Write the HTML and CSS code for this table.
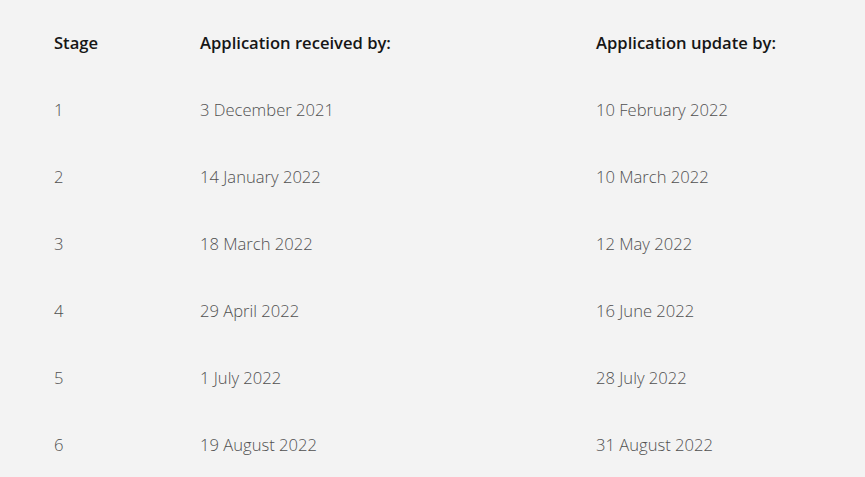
FILE: index.html
```html
<!DOCTYPE html>
<html lang="en">
<head>
<meta charset="utf-8">
<title>Stages</title>
<link rel="stylesheet" href="styles.css">
</head>
<body>
<div class="table">
  <div class="row head">
    <div class="c1">Stage</div>
    <div class="c2">Application received by:</div>
    <div class="c3">Application update by:</div>
  </div>
  <div class="row"><div class="c1">1</div><div class="c2">3 December 2021</div><div class="c3">10 February 2022</div></div>
  <div class="row"><div class="c1">2</div><div class="c2">14 January 2022</div><div class="c3">10 March 2022</div></div>
  <div class="row"><div class="c1">3</div><div class="c2">18 March 2022</div><div class="c3">12 May 2022</div></div>
  <div class="row"><div class="c1">4</div><div class="c2">29 April 2022</div><div class="c3">16 June 2022</div></div>
  <div class="row"><div class="c1">5</div><div class="c2">1 July 2022</div><div class="c3">28 July 2022</div></div>
  <div class="row"><div class="c1">6</div><div class="c2">19 August 2022</div><div class="c3">31 August 2022</div></div>
</div>
</body>
</html>
```
FILE: styles.css
```css
html, body {
  margin: 0;
  background: #f3f3f3;
  height: 100%;
}
body {
  font-family: "Open Sans", "Liberation Sans", sans-serif;
  padding: 9px 0 0 54px;
  box-sizing: border-box;
}
.table {
  display: flex;
  flex-direction: column;
}
.row {
  display: grid;
  grid-template-columns: 146px 396px 1fr;
  height: 67px;
  align-items: center;
  font-size: 16.6px;
  font-weight: 300;
  color: #505050;
}
.row.head {
  font-weight: 600;
  color: #161616;
}
```
